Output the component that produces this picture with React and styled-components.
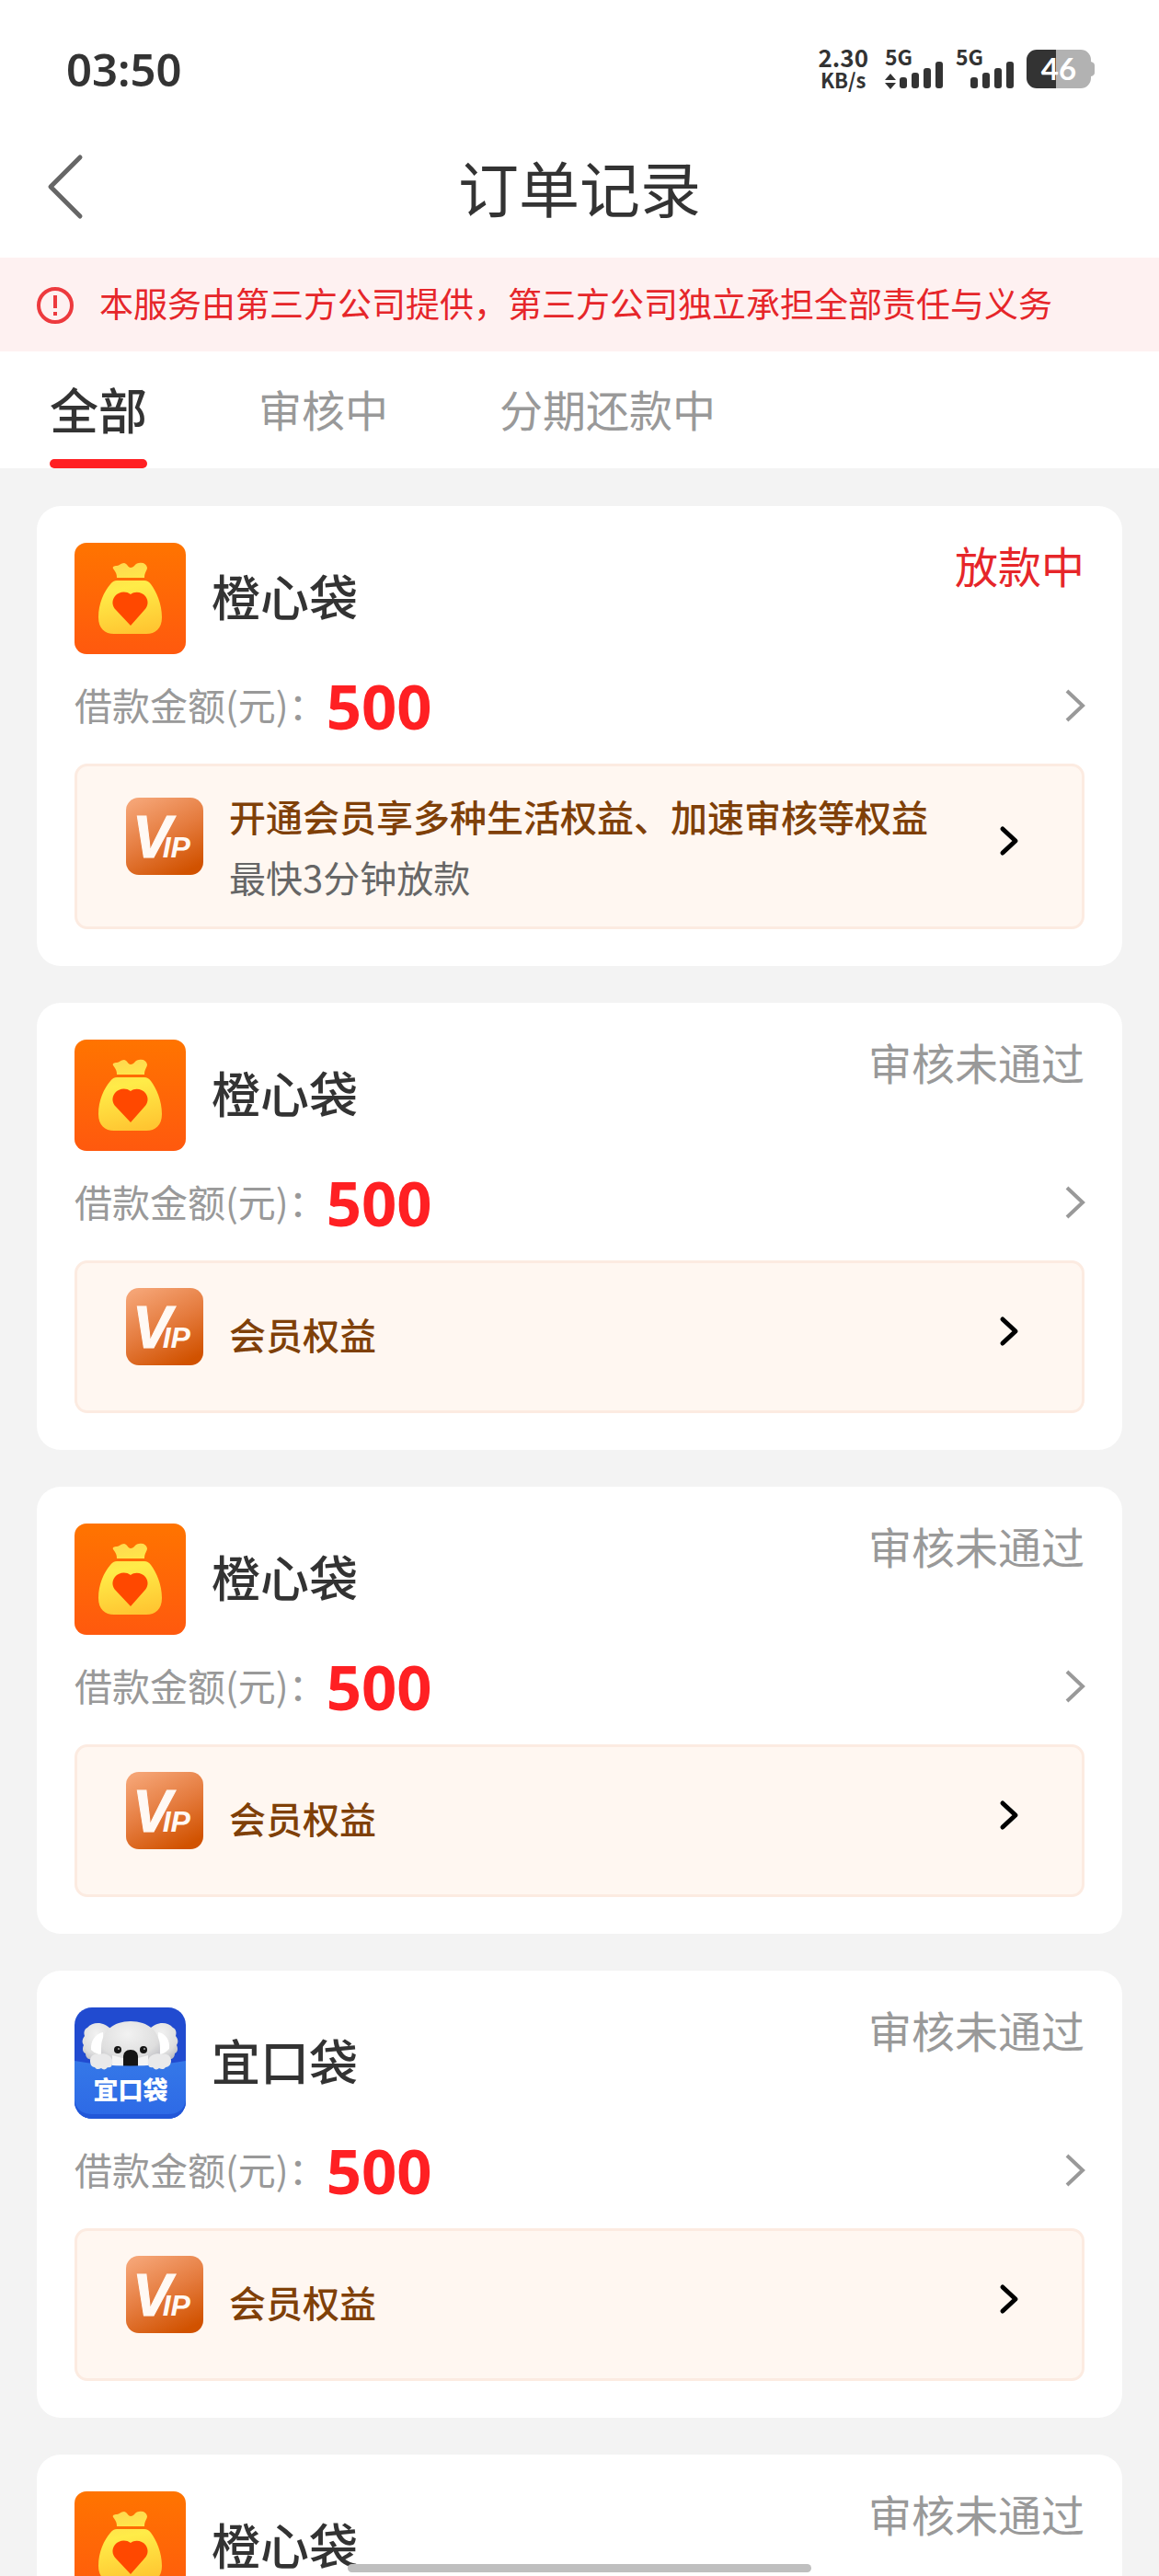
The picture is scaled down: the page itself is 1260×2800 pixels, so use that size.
import { useState } from "react";
import styled, { createGlobalStyle } from "styled-components";

const GlobalStyle = createGlobalStyle`
  * {
    box-sizing: border-box;
  }

  body {
    margin: 0;
    background-color: #f3f3f3;
    color: #333;
    font-family: "Noto Sans CJK SC", "Noto Sans", sans-serif;
  }

  button {
    border: none;
    padding: 0;
    background: none;
    color: inherit;
    font: inherit;
    text-align: left;
    cursor: pointer;
  }

  svg {
    display: block;
    flex-shrink: 0;
    overflow: visible;
  }
`;

const tabs = ["全部", "审核中", "分期还款中"];

const orders = [
  {
    id: 1,
    name: "橙心袋",
    logo: "bag",
    amount: 500,
    status: "放款中",
    isActive: true,
    benefit: "开通会员享多种生活权益、加速审核等权益",
    hint: "最快3分钟放款",
  },
  { id: 2, name: "橙心袋", logo: "bag", amount: 500, status: "审核未通过", benefit: "会员权益" },
  { id: 3, name: "橙心袋", logo: "bag", amount: 500, status: "审核未通过", benefit: "会员权益" },
  { id: 4, name: "宜口袋", logo: "koala", amount: 500, status: "审核未通过", benefit: "会员权益" },
  { id: 5, name: "橙心袋", logo: "bag", amount: 500, status: "审核未通过", benefit: "会员权益" },
];

const Screen = styled.div`
  position: relative;
  display: flex;
  flex-direction: column;
  height: 100vh;
  overflow: hidden;
`;

const StatusBar = styled.div`
  display: flex;
  justify-content: space-between;
  align-items: center;
  height: 132px;
  padding: 18px 70px 0 72px;
  background-color: #fff;
  flex-shrink: 0;
`;

const Clock = styled.div`
  font-family: "Noto Sans", sans-serif;
  font-size: 49px;
  font-weight: 600;
  line-height: 56px;
`;

const Indicators = styled.div`
  display: flex;
  align-items: center;
  gap: 13px;
`;

const NetSpeed = styled.div`
  margin-right: 5px;
  padding-bottom: 2px;
  font-size: 26px;
  font-weight: 700;
  line-height: 24px;
  text-align: center;

  small {
    display: block;
    font-size: 22px;
    line-height: 24px;
  }
`;

const NavBar = styled.header`
  display: grid;
  grid-template-columns: 1fr auto 1fr;
  align-items: center;
  height: 148px;
  padding: 0 51px;
  background-color: #fff;
  flex-shrink: 0;

  h1 {
    margin: 0;
    padding-bottom: 8px;
    font-size: 66px;
    font-weight: 400;
    line-height: 80px;
  }
`;

const Back = styled.button`
  justify-self: start;
  padding-bottom: 6px;
`;

const Notice = styled.div`
  display: flex;
  align-items: center;
  gap: 27px;
  min-height: 102px;
  padding: 0 40px;
  background-color: #fef1f1;
  color: #e6262a;
  font-size: 37px;
  line-height: 48px;
  flex-shrink: 0;

  span {
    padding-bottom: 4px;
  }
`;

const TabBar = styled.nav`
  display: flex;
  gap: 121px;
  height: 127px;
  padding: 0 54px;
  background-color: #fff;
  flex-shrink: 0;
`;

const Tab = styled.button`
  position: relative;
  padding-bottom: 4px;
  color: ${({ $active }) => ($active ? "#333" : "#999")};
  font-size: ${({ $active }) => ($active ? 53 : 47)}px;
  font-weight: ${({ $active }) => ($active ? 500 : 400)};
  white-space: nowrap;

  &::after {
    content: "";
    display: ${({ $active }) => ($active ? "block" : "none")};
    position: absolute;
    left: 0;
    right: 0;
    bottom: 0;
    height: 10px;
    border-radius: 5px;
    background-color: #ff2023;
  }
`;

const OrderList = styled.main`
  display: flex;
  flex-direction: column;
  gap: 40px;
  flex: 1;
  min-height: 0;
  padding: 41px 40px;
  overflow-y: auto;
  scrollbar-width: none;
`;

const Card = styled.article`
  padding: 40px 41px;
  border-radius: 26px;
  background-color: #fff;
  flex-shrink: 0;
`;

const CardHead = styled.div`
  display: flex;
  align-items: center;
  gap: 28px;

  h2 {
    flex: 1;
    margin: 0;
    padding-bottom: 8px;
    font-size: 53px;
    font-weight: 500;
    line-height: 72px;
  }
`;

const Status = styled.span`
  align-self: flex-start;
  color: ${({ $active }) => ($active ? "#e6262a" : "#999")};
  font-size: 47px;
  line-height: 48px;
`;

const AmountRow = styled.button`
  display: flex;
  align-items: center;
  width: 100%;
  height: 112px;
  margin-bottom: 7px;
`;

const AmountLabel = styled.span`
  padding-bottom: 4px;
  color: #999;
  font-size: 41px;
`;

const Amount = styled.strong`
  flex: 1;
  color: #ff2023;
  font-family: "Noto Sans", sans-serif;
  font-size: 67px;
  font-weight: 700;
  line-height: 72px;
`;

const Benefit = styled.button`
  display: flex;
  align-items: center;
  gap: 28px;
  width: 100%;
  min-height: 166px;
  padding: 21px 69px 21px 53px;
  border: 3px solid #fcebe1;
  border-radius: 14px;
  background-color: #fff7f1;
  font-size: 40px;
  line-height: 66px;
`;

const BenefitText = styled.span`
  flex: 1;
  padding-bottom: ${({ $single }) => ($single ? 6 : 0)}px;
  color: #7f4008;
  font-weight: 500;

  small {
    display: block;
    color: #666;
    font-size: 40px;
    font-weight: 400;
  }
`;

const BenefitIcon = styled.span`
  padding-bottom: 22px;
`;

const BenefitArrow = styled.span`
  padding-bottom: 12px;
`;

const HomeBar = styled.div`
  position: absolute;
  left: 30%;
  right: 30%;
  bottom: 4px;
  height: 9px;
  border-radius: 5px;
  background-color: #bfbfbf;
`;

const Signal = ({ hasTraffic }) => (
  <svg width="64" height="44" viewBox="0 0 64 44" fill="#333">
    <text x="0" y="18" fontSize="23" fontWeight="700">5G</text>
    {hasTraffic && <path d="M0 34 6 27l6 7zM0 37h12l-6 7z" />}
    <rect x="16" y="31" width="8" height="12" rx="3" />
    <rect x="29" y="26" width="8" height="17" rx="3" />
    <rect x="42" y="21" width="8" height="22" rx="3" />
    <rect x="55" y="14" width="8" height="29" rx="3" />
  </svg>
);

const Battery = () => (
  <svg width="74" height="42" viewBox="0 0 74 42">
    <path d="M11 0h21v42H11A11 11 0 0 1 0 31V11A11 11 0 0 1 11 0z" fill="#333" />
    <path d="M32 0h27a11 11 0 0 1 11 11v2q4 1 4 4v8q0 3-4 4v2a11 11 0 0 1-11 11H32z" fill="#b2b2b2" />
    <text x="35" y="33" fontFamily="Lato, sans-serif" fontSize="33" fontWeight="700" fill="#fff" textAnchor="middle">46</text>
  </svg>
);

const BagLogo = () => (
  <svg width="121" height="121" viewBox="0 0 121 121">
    <defs>
      <linearGradient id="bagBack" x1="0" y1="0" x2="0" y2="1">
        <stop offset="0" stopColor="#ff7400" />
        <stop offset="1" stopColor="#ff590e" />
      </linearGradient>
      <linearGradient id="bagBody" gradientUnits="userSpaceOnUse" x1="50" y1="22" x2="66" y2="99">
        <stop offset="0" stopColor="#ffd84f" />
        <stop offset="0.35" stopColor="#ffec48" />
        <stop offset="1" stopColor="#ffc531" />
      </linearGradient>
    </defs>
    <rect width="121" height="121" rx="13" fill="url(#bagBack)" />
    <path
      d="M46 38c0-4-1-6-4-10-1-2 1-3 4-3 3 0 4-3 8-3 4 1 4 5 7 5 4 0 5-5 9-5 5-1 8 1 9 5 0 3-3 5-3 11z"
      fill="url(#bagBody)"
    />
    <path
      d="M46 41h30q4 0 7 4c6 8 12 21 12 36 0 12-7 18-17 18H43C33 99 26 93 26 81c0-15 6-28 13-36q3-4 7-4z"
      fill="url(#bagBody)"
    />
    <path
      d="M61 56c5-4 13-2 16 2 4 5 3 11-1 15L61 90 45 73c-4-4-5-10-1-15 4-5 12-6 17-2z"
      fill="#ff4800"
    />
  </svg>
);

const KoalaLogo = () => (
  <svg width="121" height="121" viewBox="0 0 121 121">
    <defs>
      <clipPath id="koalaClip">
        <rect width="121" height="121" rx="19" />
      </clipPath>
      <radialGradient id="koalaFur" cx="0.45" cy="0.3" r="0.75">
        <stop offset="0" stopColor="#f2f2f2" />
        <stop offset="0.7" stopColor="#dedede" />
        <stop offset="1" stopColor="#bcbcc2" />
      </radialGradient>
      <linearGradient id="koalaPocket" x1="0" y1="0" x2="0" y2="1">
        <stop offset="0" stopColor="#3578e8" />
        <stop offset="1" stopColor="#2d69e6" />
      </linearGradient>
    </defs>
    <g clipPath="url(#koalaClip)">
      <rect width="121" height="121" fill="#214bd0" />
      <path
        d="M40 24C32 15 20 15 14 22c-4 2-4 6-3 9-3 4-3 7-1 10-2 4-1 8 2 9 0 5 4 7 8 7h22z"
        fill="url(#koalaFur)"
      />
      <path
        d="M81 24c8-9 20-9 26-2 4 2 4 6 3 9 3 4 3 7 1 10 2 4 1 8-2 9 0 5-4 7-8 7H79z"
        fill="url(#koalaFur)"
      />
      <path d="M31 27c-8 1-14 10-13 19 4 4 9 6 14 5z" fill="#fff" />
      <path d="M91 27c8 1 13 9 12 18-4 4-9 7-13 6z" fill="#fff" />
      <path d="M29 62V44c0-18 13-29 32-29s32 11 32 29v18z" fill="url(#koalaFur)" />
      <path d="M41 52q20 7 39 0v12H41z" fill="#f4f4f4" />
      <circle cx="47" cy="46" r="4" fill="#161616" />
      <circle cx="75" cy="46" r="4" fill="#161616" />
      <circle cx="48" cy="45" r="1" fill="#aaa" />
      <circle cx="76" cy="45" r="1" fill="#aaa" />
      <path d="M53 66V54c0-5 3-8 8-8s8 3 8 8v12z" fill="#151515" />
      <path d="M0 58q60 11 121 0v63H0z" fill="url(#koalaPocket)" />
      <path d="M0 101q3 15 19 15h83q16 0 19-15v20H0z" fill="#2257d8" />
      <path d="M17 58c0-6 5-8 9-7 6-2 13 0 15 6 1 6-1 9-5 8-2 3-5 3-7 1-3 2-6 1-7-1-4 0-5-4-5-7z" fill="#e9e9ea" />
      <path d="M105 58c0-6-5-8-9-7-6-2-14 0-16 6-1 6 1 9 5 8 2 3 5 3 7 1 3 2 6 1 7-1 4 0 6-4 6-7z" fill="#e9e9ea" />
      <text x="61" y="100" fontSize="27" fontWeight="900" fill="#fff" textAnchor="middle">宜口袋</text>
    </g>
  </svg>
);

const VipIcon = () => (
  <svg width="84" height="84" viewBox="0 0 84 84">
    <defs>
      <linearGradient id="vipBack" x1="0.2" y1="0" x2="0.7" y2="1">
        <stop offset="0" stopColor="#f5a475" />
        <stop offset="0.5" stopColor="#e57c3f" />
        <stop offset="1" stopColor="#d15200" />
      </linearGradient>
    </defs>
    <rect width="84" height="84" rx="14" fill="url(#vipBack)" />
    <text
      x="7"
      y="65"
      fill="#fff9f4"
      stroke="#fff9f4"
      fontFamily="Liberation Sans, sans-serif"
      fontSize="64"
      fontStyle="italic"
      fontWeight="700"
    >
      V<tspan dx="-10" fontSize="32" strokeWidth="0">IP</tspan>
    </text>
  </svg>
);

const logos = {
  bag: BagLogo,
  koala: KoalaLogo,
};

const Order = ({ order }) => {
  const Logo = logos[order.logo];

  return (
    <Card>
      <CardHead>
        <Logo />
        <h2>{order.name}</h2>
        <Status $active={order.isActive}>{order.status}</Status>
      </CardHead>
      <AmountRow>
        <AmountLabel>借款金额(元)：</AmountLabel>
        <Amount>{order.amount}</Amount>
        <svg width="21" height="36" viewBox="0 0 21 36" fill="none" stroke="#999" strokeWidth="4">
          <path d="M2 2l17 16L2 34" />
        </svg>
      </AmountRow>
      <Benefit>
        <BenefitIcon><VipIcon /></BenefitIcon>
        <BenefitText $single={!order.hint}>
          {order.benefit}
          {order.hint && <small>{order.hint}</small>}
        </BenefitText>
        <BenefitArrow>
          <svg width="20" height="32" viewBox="0 0 20 32" fill="none" stroke="#000" strokeWidth="5" strokeLinecap="round" strokeLinejoin="round">
            <path d="M3 3l14 13L3 29" />
          </svg>
        </BenefitArrow>
      </Benefit>
    </Card>
  );
};

const App = () => {
  const [currentTab, setCurrentTab] = useState(0);

  return (
    <Screen>
      <GlobalStyle />
      <StatusBar>
        <Clock>03:50</Clock>
        <Indicators>
          <NetSpeed>2.30<small>KB/s</small></NetSpeed>
          <Signal hasTraffic />
          <Signal />
          <Battery />
        </Indicators>
      </StatusBar>
      <NavBar>
        <Back aria-label="返回">
          <svg width="40" height="72" viewBox="0 0 40 72" fill="none" stroke="#666" strokeWidth="5" strokeLinecap="round" strokeLinejoin="round">
            <path d="M36 4L4 36l32 32" />
          </svg>
        </Back>
        <h1>订单记录</h1>
      </NavBar>
      <Notice>
        <svg width="41" height="41" viewBox="0 0 41 41" fill="none" stroke="#ed3a3e" strokeWidth="4">
          <circle cx="20" cy="21" r="18" />
          <path d="M20 10v14M20 28v4" />
        </svg>
        <span>本服务由第三方公司提供，第三方公司独立承担全部责任与义务</span>
      </Notice>
      <TabBar>
        {tabs.map((tab, index) =>
          <Tab key={tab} $active={index === currentTab} onClick={() => setCurrentTab(index)}>
            {tab}
          </Tab>
        )}
      </TabBar>
      <OrderList>
        {orders.map((order) => <Order key={order.id} order={order} />)}
      </OrderList>
      <HomeBar />
    </Screen>
  );
};

export default App;
